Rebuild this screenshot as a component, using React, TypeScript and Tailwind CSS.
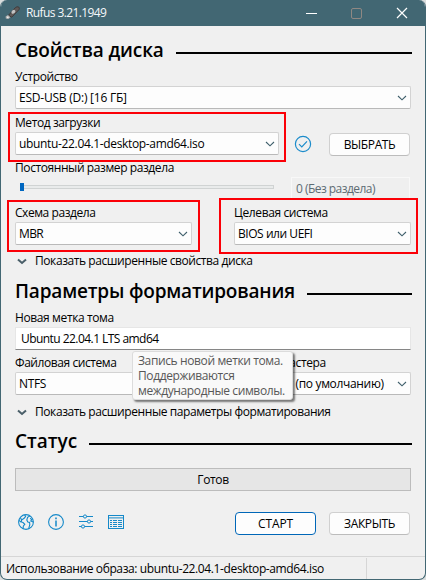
import type { ReactNode } from 'react';
import clsx from 'clsx';

const Chevron = () => (
  <svg className="shrink-0" width="10" height="6" viewBox="0 0 10 6" fill="none" stroke="#3f5f6b" strokeWidth="1.1">
    <path d="M1 1 L5 4.8 L9 1" />
  </svg>
);

const Heading = ({ children, className }: { children: ReactNode; className?: string }) => (
  <div className={clsx('flex h-[26px] items-start gap-3', className)}>
    <h2 className="shrink-0 whitespace-nowrap text-[19px] leading-[26px] font-semibold">{children}</h2>
    <div className="mt-[15px] h-0.5 grow bg-black" />
  </div>
);

const Label = ({ children, className }: { children: ReactNode; className?: string }) => (
  <div className={clsx('h-[18px] whitespace-nowrap leading-[18px]', className)}>{children}</div>
);

const Select = ({ children, className }: { children: ReactNode; className?: string }) => (
  <div
    className={clsx(
      'flex h-[23px] items-center justify-between rounded-[2px] border border-[#d3d3d3] border-b-[#b9b9b9] bg-[#fdfdfd] pr-[3px] pl-[3px] whitespace-nowrap',
      className,
    )}
  >
    <span>{children}</span>
    <Chevron />
  </div>
);

const Button = ({ children, className }: { children: ReactNode; className?: string }) => (
  <button
    className={clsx(
      'h-[23px] w-[81px] shrink-0 rounded border bg-[#fdfdfd] text-center leading-[21px]',
      className ?? 'border-[#d0d0d0] border-b-[#bcbcbc]',
    )}
  >
    {children}
  </button>
);

const Expander = ({ children, className }: { children: ReactNode; className?: string }) => (
  <div className={clsx('flex h-4 items-center gap-2 pl-0.5 leading-4 tracking-[-0.42px]', className)}>
    <svg width="10" height="7" viewBox="0 0 10 7" fill="none" stroke="#4a5f69" strokeWidth="2">
      <path d="M1 1.4 L5 5 L9 1.4" />
    </svg>
    <span className="whitespace-nowrap">{children}</span>
  </div>
);

// red frame drawn over a field
const Mark = ({ className }: { className: string }) => (
  <div className={clsx('pointer-events-none absolute border-2 border-[#fb0007]', className)} />
);

const TitleBar = () => (
  <div className="flex h-[26px] shrink-0 items-center bg-[#426773] text-[#f4f8fa]">
    <svg className="ml-1" width="16" height="14" viewBox="0 0 16 14">
      <path d="M3.4 9.4 L10.4 1.6 Q12 0.2 13.8 1.1 Q14.8 2 14 3.6 L6.8 11.2 Z" fill="#5f5958" stroke="#3f3b3b" strokeWidth="1" />
      <path d="M0.6 10.6 L3 9 L5.4 11.2 L3.4 13 L0.8 12.6 Z" fill="#b4b4b4" />
      <ellipse cx="8.4" cy="5.8" rx="2.2" ry="1.7" fill="#c4c4c4" transform="rotate(-40 8.4 5.8)" />
      <circle cx="2.8" cy="11.4" r="0.8" fill="#f2f2f2" />
    </svg>
    <span className="ml-[5px] grow whitespace-nowrap tracking-[-0.6px]">Rufus 3.21.1949</span>
    <div className="flex items-center gap-[34px] pr-[17px]">
      <div className="h-px w-[11px] bg-white" />
      <div className="h-[11px] w-[11px] rounded-[2px] border border-[#8f8883]" />
      <svg width="12" height="12" viewBox="0 0 12 12" stroke="#fff" strokeWidth="1.2">
        <path d="M1 1 L11 11 M11 1 L1 11" />
      </svg>
    </div>
  </div>
);

const Toolbar = () => (
  <div className="mt-0.5 ml-[3px] flex gap-3.5 text-[#1589c9]">
    <svg width="16" height="16" viewBox="0 0 16 16" fill="none" stroke="currentColor" strokeWidth="1.1">
      <circle cx="8" cy="8" r="7.4" />
      <path d="M6.6 0.8 L7.6 2.4 L6.4 4 L3.6 6 L3.2 8 L5 8.6 L6.8 10.4 L5.4 12 L5 14.8" />
      <path d="M2.4 3.4 L3.6 6 M0.8 6.4 L3.2 8" />
      <path d="M12 1.8 L9.6 3.4 L8.8 6 L9.8 8 L11.6 8.4 L11.8 10.6 L10.6 14.8 M12.2 4 L13.6 5.6 L12.8 7 L15.2 8" />
    </svg>
    <svg width="16" height="16" viewBox="0 0 16 16" fill="none" stroke="currentColor" strokeWidth="1.1">
      <circle cx="8" cy="8" r="7.4" />
      <path d="M8 6.6 V12.4" strokeWidth="1.5" />
      <path d="M8 3.6 V5.2" strokeWidth="1.6" />
    </svg>
    <svg width="16" height="16" viewBox="0 0 16 16" fill="none" stroke="currentColor">
      <path d="M1 2.5 H5.5 M8.5 2.5 H15 M1 7.5 H9.5 M12.5 7.5 H15 M1 12.5 H3.5 M6.5 12.5 H15" />
      <circle cx="7" cy="2.5" r="1.6" />
      <circle cx="11" cy="7.5" r="1.6" />
      <circle cx="5" cy="12.5" r="1.6" />
    </svg>
    <svg width="16" height="16" viewBox="0 0 16 16" fill="none" stroke="currentColor">
      <rect x="0.5" y="1.5" width="15" height="13" />
      <path d="M0.5 3.9 H15.5" />
      <path d="M2 6.5 H4 M2 8.5 H4 M2 10.5 H4 M2 12.5 H4 M5 6.5 H9 M5 8.5 H9 M5 10.5 H9 M5 12.5 H9 M10 6.5 H14 M10 8.5 H14 M10 10.5 H14 M10 12.5 H14" />
    </svg>
  </div>
);

const App = () => {
  return (
    <div className="h-[580px] w-[426px] bg-[#dadddd]">
      <div className="flex h-full flex-col overflow-hidden rounded-[7px] border border-t-0 border-[#426773] bg-[#f0f0f0] font-['Open_Sans','Noto_Sans',sans-serif] text-[12px] tracking-[-0.38px] text-black">
        <TitleBar />

        <div className="flex flex-col pt-[11px] pr-3.5 pl-3.5">
          <Heading className="-mr-px tracking-[-0.12px]">Свойства диска</Heading>
          <Label className="mt-[5px]">Устройство</Label>
          <Select className="tracking-[-0.23px]">ESD-USB (D:) [16 ГБ]</Select>

          <div className="mt-[5px] flex h-[42px] items-end">
            <div className="relative w-[264px] self-start">
              <Label className="tracking-[-0.42px]">Метод загрузки</Label>
              <Select className="tracking-[-0.34px]">ubuntu-22.04.1-desktop-amd64.iso</Select>
              <Mark className="-top-0.5 -right-[7px] -bottom-[7px] -left-[7px]" />
            </div>
            <svg className="mb-[3px] ml-[15px]" width="18" height="18" viewBox="0 0 18 18" fill="none" stroke="#1c8ccb" strokeWidth="1.2">
              <circle cx="9" cy="9" r="7.6" />
              <path d="M5 9.2 L7.8 12 L13 6.4" />
            </svg>
            <Button className="mr-px ml-auto border-[#d0d0d0] border-b-[#bcbcbc]">ВЫБРАТЬ</Button>
          </div>

          <Label className="mt-[3px] tracking-[-0.41px]">Постоянный размер раздела</Label>
          <div className="flex h-[23px] justify-between">
            <div className="mt-1.5 ml-[5px] flex h-2 w-[254px] items-center">
              <div className="h-2 w-1 bg-[#0067c0]" />
              <div className="h-1 grow border border-l-0 border-[#d0d3d3] bg-[#e9ebeb]" />
            </div>
            <div className="mr-px h-[23px] w-[119px] border border-[#f8f8f8] bg-[#efefef] pl-1 leading-[21px] tracking-[-0.54px] text-[#5d6b73]">
              0 (Без раздела)
            </div>
          </div>

          <div className="mt-1 flex justify-between">
            <div className="relative w-[177px]">
              <Label className="tracking-[-0.44px]">Схема раздела</Label>
              <Select className="tracking-[-0.6px]">MBR</Select>
              <Mark className="-top-1 -right-2 -bottom-[7px] -left-2" />
            </div>
            <div className="relative w-[177px]">
              <Label>Целевая система</Label>
              <Select className="tracking-[-0.45px]">BIOS или UEFI</Select>
              <Mark className="-top-1.5 -right-[7px] -bottom-[9px] -left-[15px]" />
            </div>
          </div>
          <Expander className="mt-2">Показать расширенные свойства диска</Expander>

          <Heading className="mt-[9px] -mr-px tracking-[-0.18px]">Параметры форматирования</Heading>
          <div className="relative mt-[5px]">
            <Label>Новая метка тома</Label>
            <div className="h-[23px] border border-[#e6e6e6] border-b-[#868686] bg-white pl-[5px] leading-[21px] tracking-[-0.55px]">
              Ubuntu 22.04.1 LTS amd64
            </div>
            <div className="absolute top-[42px] left-[117px] z-10 h-[49px] w-[161px] rounded-[3px] border border-[#dcdcdc] bg-[#f9f9f9] pt-px pl-[5px] leading-[15px] whitespace-nowrap text-[#575757] shadow-[2px_2px_2px_rgba(0,0,0,0.5)]">
              <div>Запись новой метки тома.</div>
              <div>Поддерживаются</div>
              <div>международные символы.</div>
            </div>
          </div>
          <div className="mt-1 flex justify-between">
            <div className="w-[177px]">
              <Label className="tracking-[-0.43px]">Файловая система</Label>
              <Select>NTFS</Select>
            </div>
            <div className="w-[177px]">
              <Label>Размер кластера</Label>
              <Select className="tracking-[-0.33px]">4096 байт (по умолчанию)</Select>
            </div>
          </div>
          <Expander className="mt-[9px]">Показать расширенные параметры форматирования</Expander>

          <Heading className="mt-2 -mr-px tracking-normal">Статус</Heading>
          <div className="mt-3.5 h-[23px] border border-[#bcbcbc] bg-[#e6e6e6] text-center leading-[21px]">Готов</div>

          <div className="mt-[21px] flex h-[23px] justify-between">
            <Toolbar />
            <div className="mr-px flex gap-[13px]">
              <Button className="border-[#0067b8] tracking-[-0.12px]">СТАРТ</Button>
              <Button>ЗАКРЫТЬ</Button>
            </div>
          </div>
        </div>

        <div className="mt-[21px] flex grow border-t border-[#d6d6d6] leading-[22px]">
          <div className="my-px w-[366px] border-r border-[#d6d6d6] pl-[5px] whitespace-nowrap">
            Использование образа: ubuntu-22.04.1-desktop-amd64.iso
          </div>
        </div>
      </div>
    </div>
  );
};

export default App;
